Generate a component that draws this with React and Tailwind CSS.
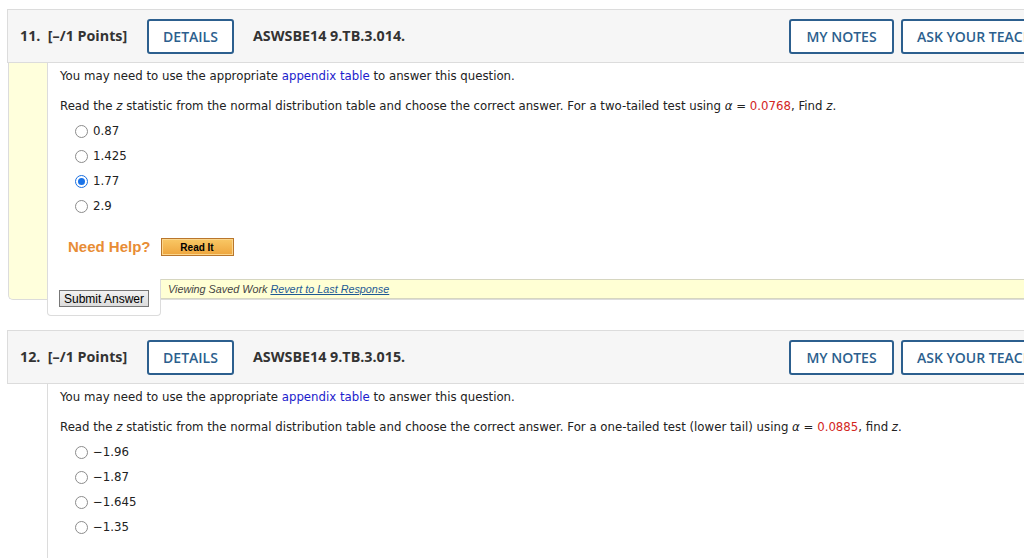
import React from "react";

const body = "font-['DejaVu_Sans','Verdana',sans-serif] text-[11.75px] text-[#222]";

function Radio({ checked }) {
  if (checked) {
    return (
      <span className="flex h-[13px] w-[13px] items-center justify-center rounded-full border border-[#1a6fe0] bg-white">
        <span className="h-[7px] w-[7px] rounded-full bg-[#1a73e8]" />
      </span>
    );
  }
  return <span className="h-[13px] w-[13px] rounded-full border border-[#8c8c8c] bg-white" />;
}

function Header({ num, code }) {
  const btn =
    "flex h-[35px] items-center justify-center rounded-[3px] border-2 border-[#2c5f8e] bg-white text-[14px] font-semibold text-[#2c5f8e]";
  return (
    <div className="flex h-[54px] w-[1100px] items-center border border-r-0 border-[#dcdcdc] bg-[#f6f6f6] pl-[12px] font-['Open_Sans',sans-serif] text-[14.3px] font-bold text-[#333]">
      <div className="w-[127px] whitespace-pre">{num}.  [–/1 Points]</div>
      <div className={`${btn} w-[87px]`}>DETAILS</div>
      <div className="ml-[19px] w-[536px]">{code}</div>
      <div className={`${btn} w-[105px]`}>MY NOTES</div>
      <div className={`${btn} ml-[7px] w-[170px] justify-start pl-[14px]`}>ASK YOUR TEACHER</div>
    </div>
  );
}

function Content({ intro, alpha, options, selected }) {
  return (
    <div className={`${body} pl-[12px] pt-[5px]`}>
      <p className="h-[16px] leading-[16px]">
        You may need to use the appropriate <span className="text-[#1c1ccc]">appendix table</span> to answer this question.
      </p>
      <p className="mt-[14px] h-[16px] leading-[16px]">
        Read the <i>z</i> statistic from the normal distribution table and choose the correct answer. {intro} using{" "}
        <i>α</i> = <span className="text-[#d3261e]">{alpha}</span>, {intro.startsWith("For a two") ? "Find" : "find"}{" "}
        <i>z</i>.
      </p>
      <div className="mt-[5px] pl-[15px]">
        {options.map((o) => (
          <div key={o} className="flex h-[25px] items-center gap-[5px]">
            <Radio checked={o === selected} />
            <span>{o}</span>
          </div>
        ))}
      </div>
    </div>
  );
}

export default function App() {
  return (
    <div className="h-[558px] w-[1024px] overflow-hidden bg-white pl-[7px] pt-[9px]">
      {/* question 11 */}
      <Header num="11" code="ASWSBE14 9.TB.3.014." />
      <div className="ml-[1px] w-[1100px] rounded-bl-[5px] border border-r-0 border-t-0 border-[#dcdcdc] bg-[#ffffdc] pl-[38px]">
        <div className="h-[216px] border-l border-[#dcdcdc] bg-white">
          <Content
            intro="For a two-tailed test"
            alpha="0.0768"
            options={["0.87", "1.425", "1.77", "2.9"]}
            selected="1.77"
          />
          <div className="mt-[19px] flex h-[18px] items-center pl-[20px]">
            <span className="font-['Liberation_Sans',Arial,sans-serif] text-[15px] font-bold text-[#e88d35]">Need Help?</span>
            <span className="ml-[10px] flex h-[18px] w-[73px] items-center justify-center border border-[#b9762c] bg-gradient-to-b from-[#f9c865] to-[#eea53c] shadow-[inset_0_0_0_1px_#fbd68c] font-['Liberation_Sans',Arial,sans-serif] text-[10px] font-bold text-black">
              Read It
            </span>
          </div>
        </div>
        <div className="flex h-[20px] items-start">
          <div className="-mb-[17px] h-[37px] w-[114px] rounded-b-[4px] border border-t-0 border-[#dcdcdc] bg-white pl-[11px] pt-[11px]">
            <div className="flex h-[17px] w-[90px] items-center justify-center border border-[#777] bg-gradient-to-b from-[#f2f2f2] to-[#dcdcdc] font-['Liberation_Sans',Arial,sans-serif] text-[12px] text-black">
              Submit Answer
            </div>
          </div>
          <div className="flex h-[20px] flex-1 items-center border-y border-[#d6d6c0] bg-[#ffffd4] pl-[7px] font-['Liberation_Sans',Arial,sans-serif] text-[10.8px] italic text-[#444]">
            Viewing Saved Work&nbsp;<span className="text-[#1d5a94] underline">Revert to Last Response</span>
          </div>
        </div>
      </div>

      {/* question 12 */}
      <div className="mt-[30px]">
        <Header num="12" code="ASWSBE14 9.TB.3.015." />
        <div className="ml-[1px] w-[1100px] pl-[39px]">
          <div className="h-[200px] border-l border-[#dcdcdc] bg-white">
            <Content
              intro="For a one-tailed test (lower tail)"
              alpha="0.0885"
              options={["−1.96", "−1.87", "−1.645", "−1.35"]}
              selected={null}
            />
          </div>
        </div>
      </div>
    </div>
  );
}
